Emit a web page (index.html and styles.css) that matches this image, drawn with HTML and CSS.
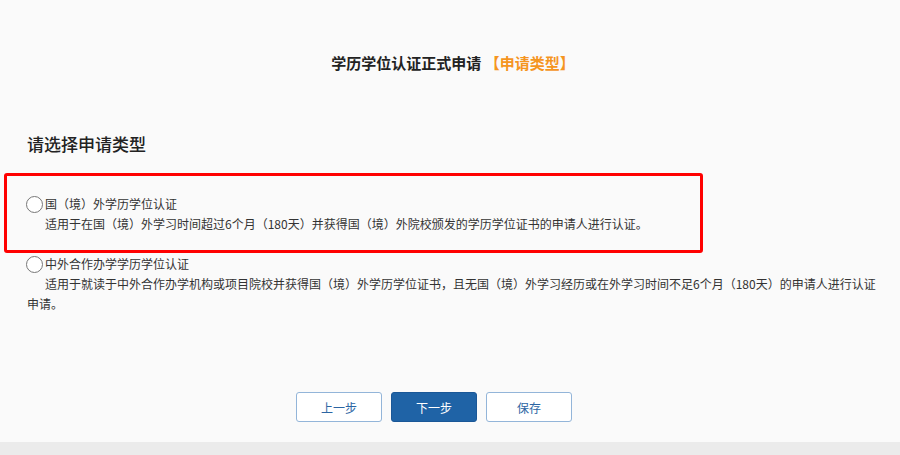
FILE: index.html
```html
<!DOCTYPE html>
<html lang="zh-CN">
<head>
  <meta charset="UTF-8">
  <meta name="viewport" content="width=device-width, initial-scale=1.0">
  <title>学历学位认证正式申请</title>
  <link rel="stylesheet" href="styles.css">
</head>
<body>
  <div class="page">
    <h2 class="page-title">学历学位认证正式申请 <span class="step">【申请类型】</span></h2>

    <div class="content">
      <h3 class="section-title">请选择申请类型</h3>

      <div class="option highlight">
        <label class="option-label"><span class="radio"></span>国（境）外学历学位认证</label>
        <p class="option-desc">适用于在国（境）外学习时间超过6个月（180天）并获得国（境）外院校颁发的学历学位证书的申请人进行认证。</p>
      </div>

      <div class="option">
        <label class="option-label"><span class="radio"></span>中外合作办学学历学位认证</label>
        <p class="option-desc">适用于就读于中外合作办学机构或项目院校并获得国（境）外学历学位证书，且无国（境）外学习经历或在外学习时间不足6个月（180天）的申请人进行认证申请。</p>
      </div>
    </div>

    <div class="actions">
      <button class="btn">上一步</button>
      <button class="btn btn-primary">下一步</button>
      <button class="btn">保存</button>
    </div>
  </div>
  <div class="footer-bar"></div>
</body>
</html>
```

FILE: styles.css
```css
html, body {
  margin: 0;
  padding: 0;
}
body {
  font-family: "Noto Sans CJK SC", "Noto Sans", sans-serif;
  background-color: #fafafa;
  color: #333;
}
.page {
  height: 442px;
  box-sizing: border-box;
}
.page-title {
  margin: 0;
  padding-top: 53px;
  font-size: 15px;
  line-height: 20px;
  font-weight: bold;
  text-align: center;
  padding-left: 6px;
  color: #222;
}
.step {
  color: #f5951f;
}
.content {
  padding: 0 13px 0 27px;
}
.section-title {
  margin: 59px 0 17px;
  font-size: 17px;
  line-height: 24px;
  font-weight: 500;
  color: #222;
}
.option {
  font-size: 12px;
  line-height: 20px;
}
.highlight {
  margin-left: -23px;
  width: 699px;
  box-sizing: border-box;
  padding: 18px 0 16px 20px;
  border: 3px solid #ff0000;
  border-radius: 3px;
  margin-bottom: 1px;
}
.option-label {
  display: flex;
  align-items: center;
  font-size: 12px;
}
.radio {
  width: 17px;
  height: 17px;
  box-sizing: border-box;
  border: 1px solid #777;
  border-radius: 50%;
  margin-left: -1px;
  margin-right: 2px;
  background: #fff;
}
.option-desc {
  margin: 0;
  text-indent: 18px;
}
.actions {
  display: flex;
  justify-content: center;
  gap: 9px;
  padding-top: 78px;
  padding-right: 32px;
}
.btn {
  width: 86px;
  height: 30px;
  border: 1px solid #93b5d9;
  border-radius: 3px;
  background-color: #fff;
  color: #2c65a3;
  font-family: inherit;
  font-size: 12px;
  cursor: pointer;
}
.btn-primary {
  background-color: #1f63a6;
  border-color: #1a5797;
  color: #fff;
}
.footer-bar {
  height: 13px;
  background-color: #ebebeb;
}
```
